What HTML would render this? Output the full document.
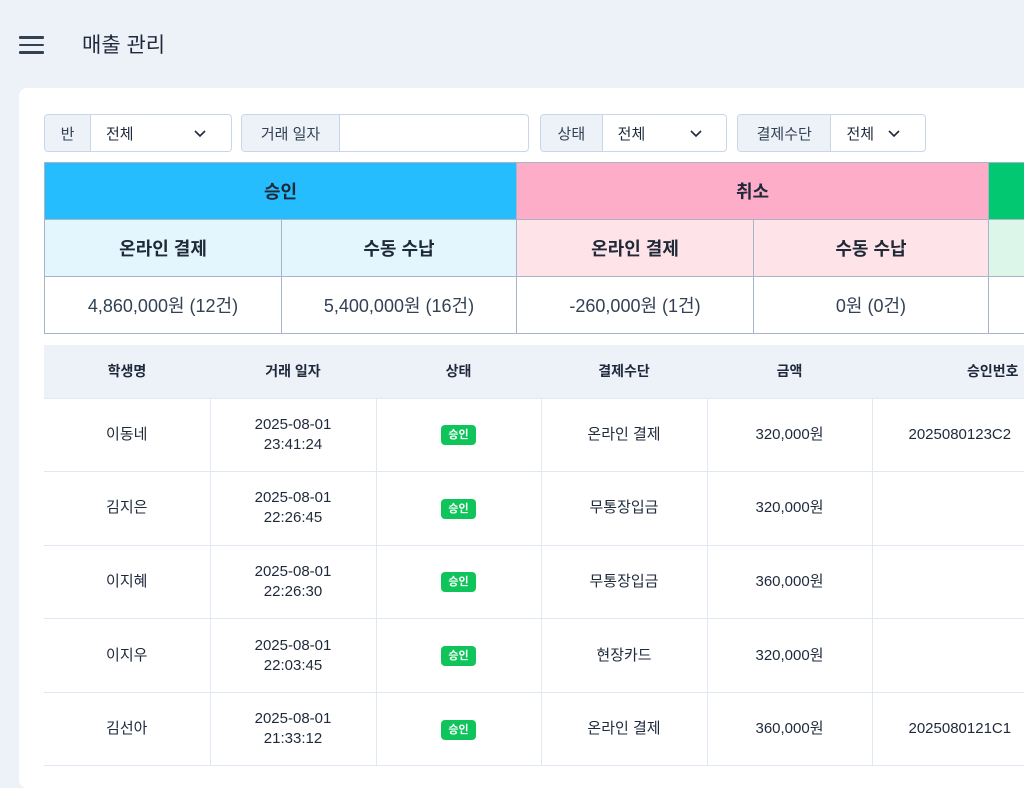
<!DOCTYPE html>
<html><head><meta charset="utf-8"><style>
*{box-sizing:border-box;margin:0;padding:0}
body{width:1024px;height:768px;overflow:hidden;background:#edf1f8;font-family:"Liberation Sans","Noto Sans CJK KR",sans-serif;color:#1f2937;position:relative}
.ham{position:absolute;left:19px;top:36px;width:25px}
.ham i{display:block;height:2.5px;background:#334155;margin-bottom:5px;border-radius:1px}
.title{position:absolute;left:82px;top:29px;font-size:21px;color:#1e293b}
.card{position:absolute;left:19px;top:88px;width:1020px;height:700px;background:#fff;border-radius:8px}
.f{position:absolute;top:114px;height:38px;border:1px solid #c9d6ea;border-radius:4px;display:flex;font-size:15px;overflow:hidden;background:#fff}
.f .l{background:#edf1f8;border-right:1px solid #c9d6ea;display:flex;align-items:center;justify-content:center;color:#334155}
.f .v{display:flex;align-items:center;padding-left:15px;position:relative;color:#1e293b}
.chev{position:absolute;top:12px;width:12px;height:12px}
table{border-collapse:collapse;position:absolute;table-layout:fixed}
.s{left:44px;top:162px;width:1100px}
.s td{border:1.5px solid #a8b4c8;text-align:center;font-size:18px}
.d{left:44px;top:345px;width:1100px}
.d th{background:#edf1f8;height:53px;font-size:14px;font-weight:bold;color:#1e293b}
.d td{border:1.5px solid #e2e8f3;height:73.6px;text-align:center;font-size:15px;color:#1e293b;line-height:20px}
.d tr td:first-child{border-left:none}
.b{display:inline-block;background:#10c45c;color:#fff;font-size:11px;font-weight:bold;padding:3px 7px;border-radius:4px;line-height:14px}
</style></head><body>
<div class="ham"><i></i><i></i><i></i></div>
<div class="title">매출 관리</div>
<div class="card"></div>
<div class="f" style="left:44px;width:188px"><div class="l" style="width:46px">반</div><div class="v" style="width:140px">전체<svg class="chev" style="left:103px" viewBox="0 0 12 12"><path d="M1 4l5 5 5-5" fill="none" stroke="#1e293b" stroke-width="1.6"/></svg></div></div>
<div class="f" style="left:241px;width:288px"><div class="l" style="width:98px">거래 일자</div><div class="v"></div></div>
<div class="f" style="left:540px;width:187px"><div class="l" style="width:62px">상태</div><div class="v" style="width:124px">전체<svg class="chev" style="left:87px" viewBox="0 0 12 12"><path d="M1 4l5 5 5-5" fill="none" stroke="#1e293b" stroke-width="1.6"/></svg></div></div>
<div class="f" style="left:737px;width:189px"><div class="l" style="width:94px">결제수단</div><div class="v" style="width:94px">전체<svg class="chev" style="left:57px" viewBox="0 0 12 12"><path d="M1 4l5 5 5-5" fill="none" stroke="#1e293b" stroke-width="1.6"/></svg></div></div>
<table class="s">
<colgroup><col style="width:237px"><col style="width:235px"><col style="width:237px"><col style="width:235px"><col style="width:156px"></colgroup>
<tr style="height:57px;font-weight:bold"><td colspan="2" style="background:#25bdfd;font-weight:bold">승인</td><td colspan="2" style="background:#feadc8;font-weight:bold">취소</td><td style="background:#02c971"></td></tr>
<tr style="height:57px"><td style="background:#e3f6fe;font-weight:bold">온라인 결제</td><td style="background:#e3f6fe;font-weight:bold">수동 수납</td><td style="background:#fee3e8;font-weight:bold">온라인 결제</td><td style="background:#fee3e8;font-weight:bold">수동 수납</td><td style="background:#dcf7ea"></td></tr>
<tr style="height:57px;color:#334155"><td>4,860,000원 (12건)</td><td>5,400,000원 (16건)</td><td>-260,000원 (1건)</td><td>0원 (0건)</td><td></td></tr>
</table>
<table class="d">
<colgroup><col style="width:166px"><col style="width:166px"><col style="width:165px"><col style="width:166px"><col style="width:165px"><col style="width:272px"></colgroup>
<tr><th>학생명</th><th>거래 일자</th><th>상태</th><th>결제수단</th><th>금액</th><th style="text-align:left;padding-left:95px">승인번호</th></tr>
<tr><td>이동네</td><td>2025-08-01<br>23:41:24</td><td><span class="b">승인</span></td><td>온라인 결제</td><td>320,000원</td><td style="text-align:left;padding-left:36px">2025080123C2</td></tr>
<tr><td>김지은</td><td>2025-08-01<br>22:26:45</td><td><span class="b">승인</span></td><td>무통장입금</td><td>320,000원</td><td></td></tr>
<tr><td>이지혜</td><td>2025-08-01<br>22:26:30</td><td><span class="b">승인</span></td><td>무통장입금</td><td>360,000원</td><td></td></tr>
<tr><td>이지우</td><td>2025-08-01<br>22:03:45</td><td><span class="b">승인</span></td><td>현장카드</td><td>320,000원</td><td></td></tr>
<tr><td>김선아</td><td>2025-08-01<br>21:33:12</td><td><span class="b">승인</span></td><td>온라인 결제</td><td>360,000원</td><td style="text-align:left;padding-left:36px">2025080121C1</td></tr>
</table>
</body></html>
